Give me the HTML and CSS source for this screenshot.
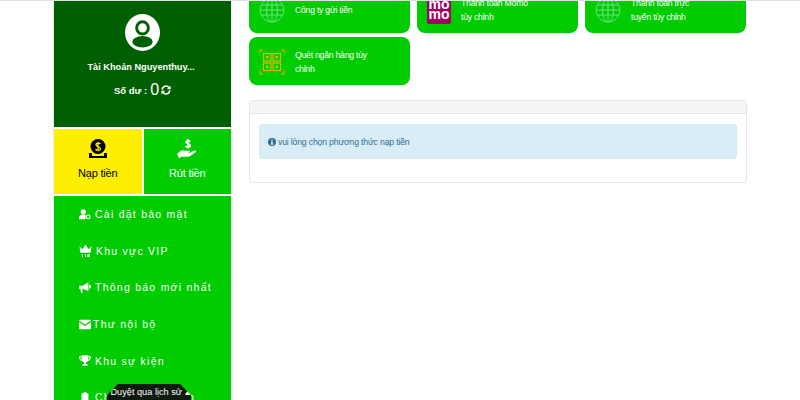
FILE: index.html
```html
<!DOCTYPE html>
<html>
<head>
    <title>Nạp tiền</title>
    <link rel="stylesheet" href="styles.css">
</head>
<body>
    <div class="page">
        <aside class="sidebar">
            <div class="profile">
                <svg class="avatar" viewBox="0 0 36 36" preserveAspectRatio="none">
                    <circle cx="18" cy="18" r="18" fill="#fff"/>
                    <circle cx="18" cy="13.500" r="6" fill="none" stroke="#005f00" stroke-width="3"/>
                    <ellipse cx="18" cy="27" rx="10.500" ry="5.500" fill="#005f00"/>
                </svg>
                <div class="account">Tài Khoản Nguyenthuy...</div>
                <div class="balance">
                    <span>Số dư :</span>
                    <span class="amount">0</span>
                    <svg class="refresh" viewBox="0 0 12 12">
                        <path d="M1.500 5.500A4.500 4.500 0 0 1 9.500 3M10.500 6.500A4.500 4.500 0 0 1 2.500 9" fill="none" stroke="#fff" stroke-width="1.800"/>
                        <path d="M11.500 .5v4.500H7zM.5 11.500V7H5z" fill="#fff"/>
                    </svg>
                </div>
            </div>
            <div class="actions">
                <a class="action action-yellow">
                    <svg class="action-icon" viewBox="0 0 20 20">
                        <circle cx="10" cy="7.500" r="7.500" fill="#000"/>
                        <path d="M1 14h3v3h12v-3h3v5H1z" fill="#000"/>
                        <path d="M12.500 5C12 4 8 3.500 8 5.800S12.500 7.500 12.500 9.800 8 11.500 7.500 10M10 2.800v9.500" fill="none" stroke="#ffee00" stroke-width="1.300"/>
                    </svg>
                    <span>Nạp tiền</span>
                </a>
                <a class="action">
                    <svg class="action-icon" viewBox="0 0 22 22">
                        <path d="M14.500 3C14 1.800 10 1.500 10 3.500S14.500 5 14.500 7.200 10 9.200 9.500 7.700M12 0v10.500" fill="none" stroke="#fff" stroke-width="1.800"/>
                        <path d="M0 16.500l4-3.500c2-1.200 3.500-.5 5 0h4c1.500 0 1.500 2-.5 2.200H9.500l4 .3 5-2.500c2-1 3.500 0 2.500 1l-6 4.500c-1 .6-2 1-3 1H4.500L2.500 21.500z" fill="#fff"/>
                    </svg>
                    <span>Rút tiền</span>
                </a>
            </div>
            <nav class="menu">
                <a class="menu-item">
                    <svg class="menu-icon" viewBox="0 0 14 12">
                        <circle cx="5" cy="3" r="3" fill="#fff"/>
                        <path d="M0 11.500V9c0-2 2-2.800 5-2.800 1 0 2 .1 2.700.3v5z" fill="#fff"/>
                        <circle cx="10.800" cy="8.800" r="2.200" fill="none" stroke="#fff" stroke-width="1.200"/>
                    </svg>
                    <span>Cài đặt bảo mật</span>
                </a>
                <a class="menu-item">
                    <svg class="menu-icon menu-icon-wide" viewBox="0 0 14 14">
                        <path d="M.5 2l3.300 3L7 0l3.200 5 3.300-3-1 7h-11z" fill="#fff"/>
                        <rect x="3" y="10.500" width="1.200" height="3" fill="#fff"/>
                        <rect x="6.400" y="10.500" width="1.200" height="3" fill="#fff"/>
                        <rect x="9" y="10.500" width="2.500" height="3" fill="#fff"/>
                    </svg>
                    <span>Khu vực VIP</span>
                </a>
                <a class="menu-item">
                    <svg class="menu-icon" viewBox="0 0 14 12">
                        <path d="M0 4h4l7-4v10L4 7.500H3.500l1 4.500H2.500L1.500 7.500H0z" fill="#fff"/>
                        <rect x="11.800" y="3" width="2" height="4" fill="#fff"/>
                    </svg>
                    <span>Thông báo mới nhất</span>
                </a>
                <a class="menu-item menu-item-tight">
                    <svg class="menu-icon" viewBox="0 0 14 11">
                        <path d="M.5 0h13c.4 0 .5.300.5.800L7 5.500 0 .8C0 .3.100 0 .5 0zM0 2.500l7 4.700 7-4.700V10c0 .5-.3 1-1 1H1c-.7 0-1-.5-1-1z" fill="#fff"/>
                    </svg>
                    <span>Thư nội bộ</span>
                </a>
                <a class="menu-item">
                    <svg class="menu-icon" viewBox="0 0 14 12">
                        <path d="M3 0h8v1h3c0 3-1 5-3.500 5.500-.7.800-1.500 1.300-2.500 1.500v2h2v2H4v-2h2V8c-1-.2-1.800-.7-2.500-1.500C1 6 0 4 0 1h3zM1.300 2.200c.1 1.500.8 2.500 2 3L3 2.200zM12.700 2.200H11l-.3 3c1.200-.5 1.900-1.500 2-3z" fill="#fff"/>
                    </svg>
                    <span>Khu sự kiện</span>
                </a>
                <a class="menu-item">
                    <svg class="menu-icon" viewBox="0 0 14 12">
                        <path d="M3 1h2.500V0h3v1H11v12H3z" fill="#fff"/>
                    </svg>
                    <span>Chi tiết giao dịch</span>
                </a>
            </nav>
            <div class="history-tip">Duyệt qua lịch sử <span class="tip-arrow"></span></div>
        </aside>
        <main class="content">
            <div class="methods">
                <a class="method">
                    <svg class="globe" viewBox="0 0 26 26">
                        <circle cx="13" cy="13" r="12"/>
                        <ellipse cx="13" cy="13" rx="5.500" ry="12"/>
                        <path d="M13 1v24M2 8h22M1 13h24M2 18h22"/>
                    </svg>
                    <span>Công ty gửi tiền</span>
                </a>
                <a class="method">
                    <div class="momo"><span>mo</span><span>mo</span></div>
                    <span>Thanh toán Momo<br>tùy chỉnh</span>
                </a>
                <a class="method">
                    <svg class="globe" viewBox="0 0 26 26">
                        <circle cx="13" cy="13" r="12"/>
                        <ellipse cx="13" cy="13" rx="5.500" ry="12"/>
                        <path d="M13 1v24M2 8h22M1 13h24M2 18h22"/>
                    </svg>
                    <span>Thanh toán trực<br>tuyến tùy chỉnh</span>
                </a>
                <a class="method">
                    <svg class="qr" viewBox="0 0 26 26">
                        <path d="M1 4V1h3M22 1h3v3M25 22v3h-3M4 25H1v-3"/>
                        <rect x="4.500" y="4.500" width="7.500" height="7.500"/>
                        <rect x="14" y="4.500" width="7.500" height="7.500"/>
                        <rect x="4.500" y="14" width="7.500" height="7.500"/>
                        <rect x="14" y="14" width="7.500" height="7.500"/>
                        <path class="qr-dot" d="M7 7h2.500v2.500H7zM16.500 7H19v2.500h-2.500zM7 16.500h2.500V19H7zM16.500 16.500H19V19h-2.500z"/>
                    </svg>
                    <span>Quét ngân hàng tùy<br>chỉnh</span>
                </a>
            </div>
            <section class="panel">
                <div class="panel-heading"></div>
                <div class="panel-body">
                    <div class="alert">
                        <svg class="info" viewBox="0 0 10 10">
                            <circle cx="5" cy="5" r="5" fill="#31708f"/>
                            <path d="M4 2h2v1.500H4zM3.800 4.300H6v3h.5v1h-3v-1H4V5.300h-.2z" fill="#d9edf7"/>
                        </svg>
                        <span>vui lòng chọn phương thức nạp tiền</span>
                    </div>
                </div>
            </section>
        </main>
    </div>
</body>
</html>
```

FILE: styles.css
```css
body {
    margin: 0;
    height: 400px;
    box-sizing: border-box;
    overflow: hidden;
    border-top: 1px solid #e2e2e2;
    background-color: #fff;
    font-family: "Liberation Sans", Arial, sans-serif;
    color: #fff;
}
.page {
    display: flex;
    width: 693px;
    margin-left: 53px;
}
.sidebar {
    position: relative;
    width: 178px;
    height: 399px;
    overflow: hidden;
    flex-shrink: 0;
    margin-right: 18px;
    border-left: 1px solid #eee;
    box-sizing: border-box;
}
.profile {
    height: 126px;
    padding-top: 13px;
    box-sizing: border-box;
    background-color: #005f00;
    text-align: center;
}
.avatar {
    display: block;
    width: 35px;
    height: 37px;
    margin: 0 auto;
}
.account {
    margin-top: 9px;
    padding-right: 3px;
    font-size: 9.200px;
    font-weight: bold;
    line-height: 14px;
}
.balance {
    display: flex;
    justify-content: center;
    align-items: center;
    gap: 3px;
    margin-top: 7px;
    height: 18px;
    font-size: 9.500px;
    font-weight: bold;
}
.amount {
    font-size: 16px;
    font-weight: normal;
}
.refresh {
    width: 10px;
    height: 10px;
    margin-left: -1px;
}
.actions {
    display: grid;
    grid-template-columns: 1fr 1fr;
    gap: 2px;
    margin: 2px 0;
}
.action {
    display: flex;
    flex-direction: column;
    align-items: center;
    height: 65px;
    padding-top: 10px;
    box-sizing: border-box;
    background-color: #00cc00;
    font-size: 11px;
    letter-spacing: -0.200px;
}
.action span {
    margin-top: 8px;
}
.action-yellow {
    background-color: #ffee00;
    color: #000;
}
.action-icon {
    width: 20px;
    height: 20px;
}
.menu {
    display: flex;
    flex-direction: column;
    height: 204px;
    padding-left: 25px;
    box-sizing: border-box;
    background-color: #00cc00;
}
.menu-item {
    display: flex;
    align-items: center;
    gap: 4px;
    flex-shrink: 0;
    height: 36.600px;
    font-size: 10.500px;
    letter-spacing: 1.250px;
}
.menu-item-tight {
    gap: 2px;
}
.menu-icon {
    width: 12px;
    height: 11px;
}
.menu-icon-wide {
    width: 13px;
    height: 14px;
}
.history-tip {
    position: absolute;
    left: 53px;
    bottom: 0;
    width: 84px;
    height: 16px;
    padding-left: 3px;
    box-sizing: border-box;
    background-color: #0f1a0f;
    clip-path: polygon(13% 0, 87% 0, 100% 70%, 100% 100%, 0 100%, 0 70%);
    font-size: 9.200px;
    line-height: 16px;
    text-align: center;
    white-space: nowrap;
}
.tip-arrow {
    display: inline-block;
    width: 0;
    height: 0;
    border-left: 3px solid transparent;
    border-right: 3px solid transparent;
    border-bottom: 5px solid #fff;
}
.content {
    flex: 1;
}
.methods {
    display: grid;
    grid-template-columns: repeat(3, 161px);
    gap: 4px 7px;
    margin-top: -16px;
}
.method {
    display: flex;
    align-items: center;
    gap: 10px;
    height: 48px;
    padding: 1px 0 0 10px;
    box-sizing: border-box;
    border-radius: 8px;
    background-color: #00cc00;
    font-size: 8.700px;
    letter-spacing: -0.250px;
    line-height: 14px;
}
.globe {
    width: 26px;
    height: 26px;
    flex-shrink: 0;
    fill: none;
    stroke: #6fe08a;
    stroke-width: 1;
}
.qr {
    width: 26px;
    height: 26px;
    flex-shrink: 0;
    fill: none;
    stroke: #e0b800;
    stroke-width: 1.200;
}
.qr-dot {
    fill: #e0b800;
    stroke: none;
}
.momo {
    display: flex;
    flex-direction: column;
    align-items: center;
    justify-content: flex-end;
    width: 24px;
    height: 38px;
    margin-top: -10px;
    padding-bottom: 5px;
    box-sizing: border-box;
    flex-shrink: 0;
    border-radius: 2px;
    background-color: #a50064;
    font-size: 14px;
    font-weight: bold;
    letter-spacing: 0;
    line-height: 10px;
}
.panel {
    margin-top: 15px;
    margin-right: -1px;
    height: 83px;
    box-sizing: border-box;
    border: 1px solid #e6e6e6;
    border-radius: 3px;
}
.panel-heading {
    height: 12px;
    background-color: #f5f5f5;
    border-bottom: 1px solid #e6e6e6;
}
.panel-body {
    padding: 10px 9px;
}
.alert {
    display: flex;
    align-items: center;
    gap: 2px;
    height: 35px;
    padding-left: 8px;
    box-sizing: border-box;
    border: 1px solid #d2ecf4;
    border-radius: 3px;
    background-color: #d9edf7;
    color: #31708f;
    font-size: 8.700px;
    letter-spacing: -0.180px;
}
.info {
    width: 8px;
    height: 8px;
}
```
